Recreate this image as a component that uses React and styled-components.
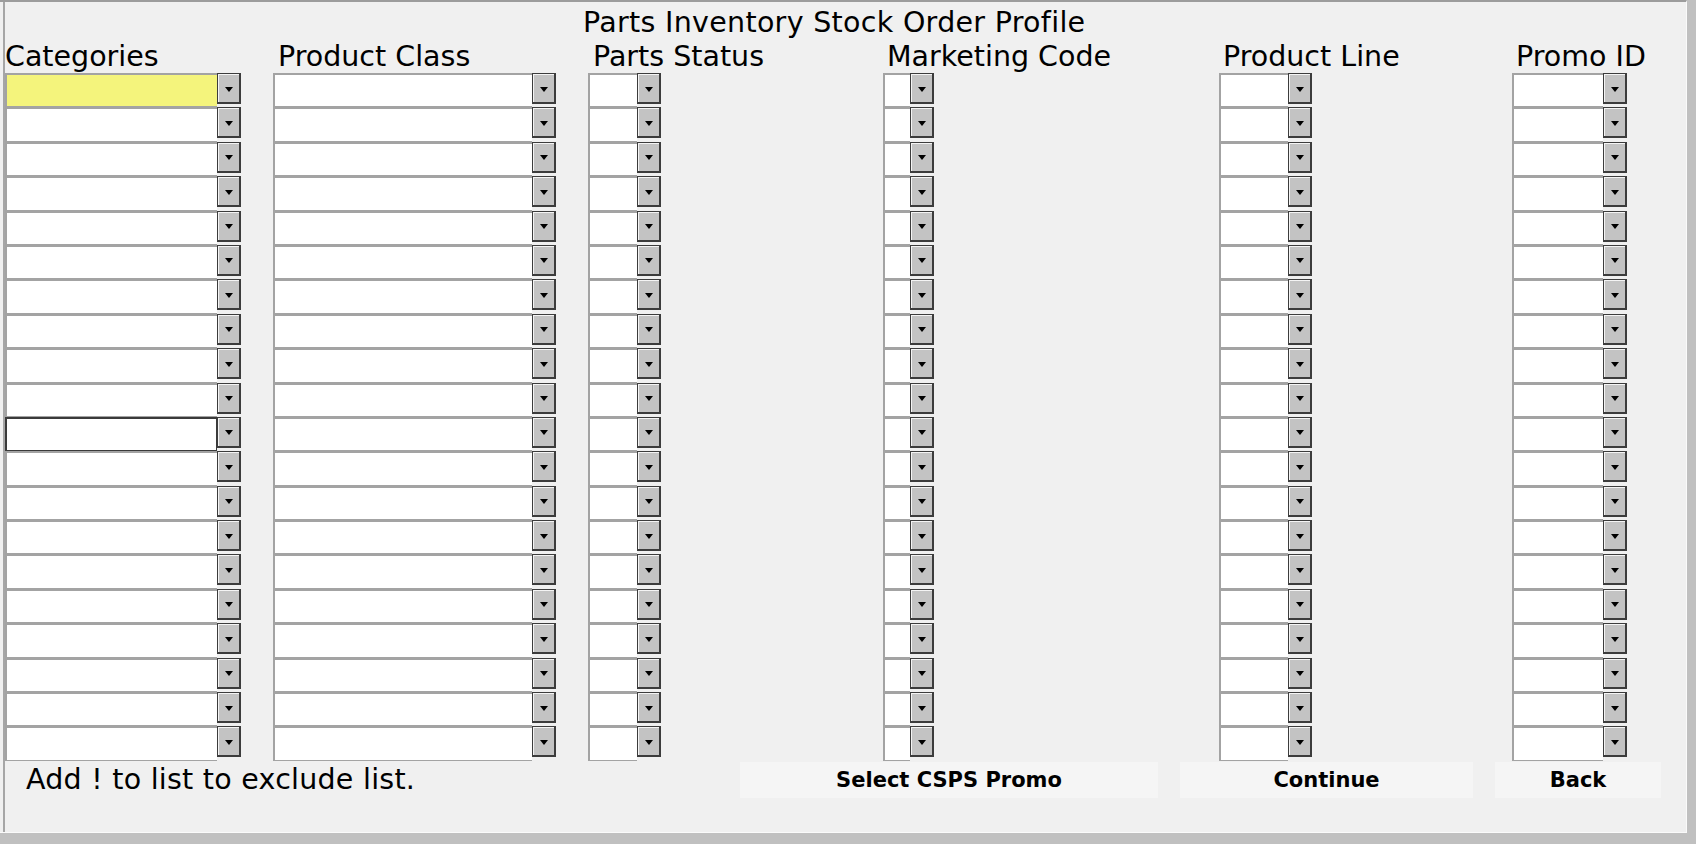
import React from "react";
import styled, { createGlobalStyle } from "styled-components";

const GlobalStyle = createGlobalStyle`
  html, body {
    margin: 0;
    padding: 0;
    background: #c0c0c0;
  }
  * {
    box-sizing: border-box;
  }
`;

const ROWS = 20;

// each column: its full width, the width of the edit part of its combos, label offset
const columns = [
  { label: "Categories", width: 268, field: 212, labelPad: 0 },
  { label: "Product Class", width: 315, field: 259, labelPad: 5 },
  { label: "Parts Status", width: 295, field: 49, labelPad: 5 },
  { label: "Marketing Code", width: 336, field: 27, labelPad: 4 },
  { label: "Product Line", width: 293, field: 69, labelPad: 4 },
  { label: "Promo ID", width: 175, field: 91, labelPad: 4 },
];

export default function App() {
  return (
    <>
      <GlobalStyle />
      <Frame>
        <Panel>
          <Inner>
            <Title>Parts Inventory Stock Order Profile</Title>
            <Columns>
              {columns.map((col, ci) => (
                <Column key={col.label} $width={col.width}>
                  <Label $pad={col.labelPad}>{col.label}</Label>
                  {Array.from({ length: ROWS }).map((_, ri) => (
                    <Combo key={ri}>
                      <Field
                        $width={col.field}
                        $highlight={ci === 0 && ri === 0}
                        $focused={ci === 0 && ri === 10}
                      />
                      <DropButton>
                        <Arrow />
                      </DropButton>
                    </Combo>
                  ))}
                </Column>
              ))}
            </Columns>
            <Footer>
              <Hint>Add ! to list to exclude list.</Hint>
              <ActionButton $width={418}>Select CSPS Promo</ActionButton>
              <ActionButton $width={293}>Continue</ActionButton>
              <ActionButton $width={166}>Back</ActionButton>
            </Footer>
          </Inner>
        </Panel>
      </Frame>
    </>
  );
}

const Frame = styled.div`
  width: 1696px;
  height: 844px;
  background: #c0c0c0;
  padding: 0 9px 11px 0;
  font-family: "DejaVu Sans", Verdana, sans-serif;
  color: #000;
`;

const Panel = styled.div`
  height: 100%;
  background: #f0f0f0;
  border-top: 2px solid #9c9c9c;
  border-right: 1px solid #fafafa;
  border-bottom: 1px solid #fafafa;
  padding-left: 3px;
`;

const Inner = styled.div`
  height: 100%;
  border-left: 2px solid #a6a6a6;
  display: flex;
  flex-direction: column;
`;

const Title = styled.div`
  padding: 4px 0 0 578px;
  font-size: 28.5px;
  line-height: 33px;
  letter-spacing: 0.3px;
  white-space: nowrap;
`;

const Columns = styled.div`
  display: flex;
`;

const Column = styled.div`
  width: ${(p) => p.$width}px;
  flex: none;
  display: flex;
  flex-direction: column;
`;

const Label = styled.div`
  font-size: 28.5px;
  line-height: 33px;
  padding: 1px 0 0 ${(p) => p.$pad}px;
  white-space: nowrap;
`;

const Combo = styled.div`
  display: flex;
  height: 34.4px;
`;

const Field = styled.div`
  width: ${(p) => p.$width}px;
  height: 100%;
  background: ${(p) => (p.$highlight ? "#f4f47c" : "#ffffff")};
  border-top: 2px solid ${(p) => (p.$focused ? "#3a3a3a" : "#a3a3a3")};
  border-left: 2px solid ${(p) => (p.$focused ? "#3a3a3a" : "#a3a3a3")};
  border-bottom: 1px solid ${(p) => (p.$focused ? "#3a3a3a" : "#a3a3a3")};
  border-right: ${(p) => (p.$focused ? "1px solid #3a3a3a" : "none")};
`;

const DropButton = styled.div`
  width: 24px;
  height: 31px;
  background: #c3c3c3;
  border: 1px solid #3c3c3c;
  border-right-width: 2px;
  border-bottom-width: 2px;
  box-shadow: inset 1px 1px 0 #f4f4f4;
  display: flex;
  align-items: center;
  justify-content: center;
`;

const Arrow = styled.span`
  width: 0;
  height: 0;
  border-left: 4.5px solid transparent;
  border-right: 4.5px solid transparent;
  border-top: 5px solid #000;
  margin-top: 2px;
`;

const Footer = styled.div`
  display: flex;
  align-items: flex-start;
  gap: 22px;
  padding-top: 1px;
`;

const Hint = styled.div`
  width: 713px;
  padding-left: 21px;
  font-size: 28.5px;
  line-height: 36px;
  letter-spacing: 0.25px;
  white-space: nowrap;
`;

const ActionButton = styled.button`
  width: ${(p) => p.$width}px;
  height: 36px;
  border: none;
  background: #f5f5f5;
  font-family: "DejaVu Sans", Verdana, sans-serif;
  font-weight: bold;
  font-size: 21px;
  color: #000;
  padding: 0;
  cursor: pointer;
`;
